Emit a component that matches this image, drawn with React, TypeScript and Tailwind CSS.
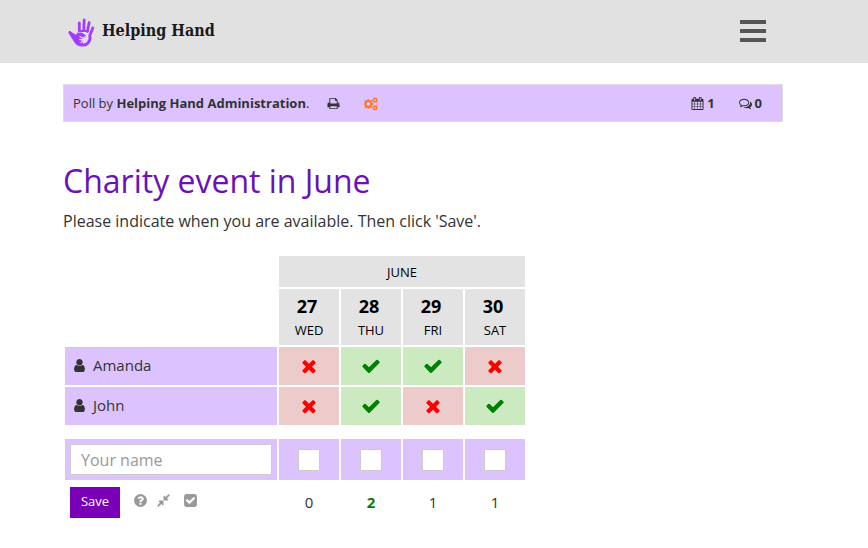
import React from 'react';

const ICONS = {
  check: 'M1671 566q0 40-28 68l-724 724-136 136q-28 28-68 28t-68-28l-136-136-362-362q-28-28-28-68t28-68l136-136q28-28 68-28t68 28l294 295 656-657q28-28 68-28t68 28l136 136q28 28 28 68z',
  times: 'M1490 1322q0 40-28 68l-136 136q-28 28-68 28t-68-28l-294-294-294 294q-28 28-68 28t-68-28l-136-136q-28-28-28-68t28-68l294-294-294-294q-28-28-28-68t28-68l136-136q28-28 68-28t68 28l294 294 294-294q28-28 68-28t68 28l136 136q28 28 28 68t-28 68l-294 294 294 294q28 28 28 68z',
  user: 'M1536 1399q0 109-62.5 187t-150.5 78h-854q-88 0-150.5-78t-62.5-187q0-85 8.5-160.5t31.5-152 58.5-131 94-89 134.5-34.5q131 128 313 128t313-128q76 0 134.5 34.5t94 89 58.5 131 31.5 152 8.5 160.5zm-256-887q0 159-112.5 271.5t-271.5 112.5-271.5-112.5-112.5-271.5 112.5-271.5 271.5-112.5 271.5 112.5 112.5 271.5z',
  print: 'M448 1536h896v-256h-896v256zm0-640h896v-384h-160q-40 0-68-28t-28-68v-160h-640v640zm1152 64q0-26-19-45t-45-19-45 19-19 45 19 45 45 19 45-19 19-45zm128 0v416q0 13-9.5 22.5t-22.5 9.5h-224v160q0 40-28 68t-68 28h-960q-40 0-68-28t-28-68v-160h-224q-13 0-22.5-9.5t-9.5-22.5v-416q0-79 56.5-135.5t135.5-56.5h64v-544q0-40 28-68t68-28h672q40 0 88 20t76 48l152 152q28 28 48 76t20 88v256h64q79 0 135.5 56.5t56.5 135.5z',
  cogs: 'M832 896q0-106-75-181t-181-75-181 75-75 181 75 181 181 75 181-75 75-181zm768 512q0-52-38-90t-90-38-90 38-38 90q0 53 37.5 90.5t90.5 37.5 90.5-37.5 37.5-90.5zm0-1024q0-52-38-90t-90-38-90 38-38 90q0 53 37.5 90.5t90.5 37.5 90.5-37.5 37.5-90.5zm-384 421v185q0 10-7 19.5t-16 10.5l-155 24q-11 35-32 76 34 48 90 115 7 11 7 20 0 12-7 19-23 30-82.5 89.5t-78.5 59.5q-11 0-21-7l-115-90q-37 19-77 31-11 108-23 155-7 24-30 24h-186q-11 0-20-7.5t-10-17.5l-23-153q-34-10-75-31l-118 89q-7 7-20 7-11 0-21-8-144-133-144-160 0-9 7-19 10-14 41-53t47-61q-23-44-35-82l-152-24q-10-1-17-9.5t-7-19.5v-185q0-10 7-19.5t16-10.5l155-24q11-35 32-76-34-48-90-115-7-11-7-20 0-12 7-20 22-30 82-89t79-59q11 0 21 7l115 90q34-18 77-32 11-108 23-154 7-24 30-24h186q11 0 20 7.5t10 17.5l23 153q34 10 75 31l118-89q8-7 20-7 11 0 21 8 144 133 144 160 0 8-7 19-12 16-42 54t-45 60q23 48 34 82l152 23q10 2 17 10.5t7 19.5zm640 533v140q0 16-149 31-12 27-30 52 51 113 51 138 0 4-4 7-122 71-124 71-8 0-46-47t-52-68q-20 2-30 2t-30-2q-14 21-52 68t-46 47q-2 0-124-71-4-3-4-7 0-25 51-138-18-25-30-52-149-15-149-31v-140q0-16 149-31 13-29 30-52-51-113-51-138 0-4 4-7 4-2 35-20t59-34 30-16q8 0 46 46.5t52 67.5q20-2 30-2t30 2q51-71 92-112l6-2q4 0 124 70 4 3 4 7 0 25-51 138 17 23 30 52 149 15 149 31zm0-1024v140q0 16-149 31-12 27-30 52 51 113 51 138 0 4-4 7-122 71-124 71-8 0-46-47t-52-68q-20 2-30 2t-30-2q-14 21-52 68t-46 47q-2 0-124-71-4-3-4-7 0-25 51-138-18-25-30-52-149-15-149-31v-140q0-16 149-31 13-29 30-52-51-113-51-138 0-4 4-7 4-2 35-20t59-34 30-16q8 0 46 46.5t52 67.5q20-2 30-2t30 2q51-71 92-112l6-2q4 0 124 70 4 3 4 7 0 25-51 138 17 23 30 52 149 15 149 31z',
  calendar: 'M192 1664h288v-288h-288v288zm352 0h320v-288h-320v288zm-352-352h288v-320h-288v320zm352 0h320v-320h-320v320zm-352-384h288v-288h-288v288zm736 736h320v-288h-320v288zm-384-736h320v-288h-320v288zm768 736h288v-288h-288v288zm-384-352h320v-320h-320v320zm-352-864v-288q0-13-9.5-22.5t-22.5-9.5h-64q-13 0-22.5 9.5t-9.5 22.5v288q0 13 9.5 22.5t22.5 9.5h64q13 0 22.5-9.5t9.5-22.5zm736 864h288v-320h-288v320zm-384-384h320v-288h-320v288zm384 0h288v-288h-288v288zm32-480v-288q0-13-9.5-22.5t-22.5-9.5h-64q-13 0-22.5 9.5t-9.5 22.5v288q0 13 9.5 22.5t22.5 9.5h64q13 0 22.5-9.5t9.5-22.5zm384-64v1280q0 52-38 90t-90 38h-1408q-52 0-90-38t-38-90v-1280q0-52 38-90t90-38h128v-96q0-66 47-113t113-47h64q66 0 113 47t47 113v96h384v-96q0-66 47-113t113-47h64q66 0 113 47t47 113v96h128q52 0 90 38t38 90z',
  comments: 'M704 384q-153 0-286 52t-211.5 141-78.5 191q0 82 53 158t149 132l97 56-35 84q34-20 62-39l44-31 53 10q78 14 153 14 153 0 286-52t211.5-141 78.5-191-78.5-191-211.5-141-286-52zm0-128q191 0 353.5 68.5t256.5 186.5 94 257-94 257-256.5 186.5-353.5 68.5q-86 0-176-16-124 88-278 128-36 9-86 16h-3q-11 0-20.5-8t-11.5-21q-1-3-1-6.5t.5-6.5 2-6l2.5-5 3.5-5.5 4-5 4.5-5 4-4.5q5-6 23-25t26-29.5 22.5-29 25-38.5 20.5-44q-124-72-195-177t-71-224q0-139 94-257t256.5-186.5 353.5-68.5zm822 1169q10 24 20.5 44t25 38.5 22.5 29 26 29.5 23 25q1 1 4 4.5t4.5 5 4 5 3.5 5.5l2.5 5 2 6 .5 6.5-1 6.5q-3 14-13 22t-22 7q-50-7-86-16-154-40-278-128-90 16-176 16-271 0-472-132 58 4 88 4 161 0 309-45t264-129q125-92 192-212t67-254q0-77-23-152 129 71 204 178t75 230q0 120-71 224.5t-195 176.5z',
  question: 'M1024 1376v-192q0-14-9-23t-23-9h-192q-14 0-23 9t-9 23v192q0 14 9 23t23 9h192q14 0 23-9t9-23zm256-672q0-88-55.5-163t-138.5-116-170-41q-243 0-371 213-15 24 8 42l132 100q7 6 19 6 16 0 25-12 53-68 86-92 34-24 86-24 48 0 85.5 26t37.5 59q0 38-20 61t-68 45q-63 28-115.5 86.5t-52.5 125.5v36q0 14 9 23t23 9h192q14 0 23-9t9-23q0-19 21.5-49.5t54.5-49.5q32-18 49-28.5t46-35 44.5-48 28-60.5 12.5-81zm384 192q0 209-103 385.5t-279.5 279.5-385.5 103-385.5-103-279.5-279.5-103-385.5 103-385.5 279.5-279.5 385.5-103 385.5 103 279.5 279.5 103 385.5z',
  compress: 'M896 960v448q0 26-19 45t-45 19-45-19l-144-144-332 332q-10 10-23 10t-23-10l-114-114q-10-10-10-23t10-23l332-332-144-144q-19-19-19-45t19-45 45-19h448q26 0 45 19t19 45zm755-672q0 13-10 23l-332 332 144 144q19 19 19 45t-19 45-45 19h-448q-26 0-45-19t-19-45v-448q0-26 19-45t45-19 45 19l144 144 332-332q10-10 23-10t23 10l114 114q10 10 10 23z',
  checkSquare: 'M813 1299l614-614q19-19 19-45t-19-45l-102-102q-19-19-45-19t-45 19l-467 467-211-211q-19-19-45-19t-45 19l-102 102q-19 19-19 45t19 45l358 358q19 19 45 19t45-19zm851-883v960q0 119-84.5 203.5t-203.5 84.5h-960q-119 0-203.5-84.5t-84.5-203.5v-960q0-119 84.5-203.5t203.5-84.5h960q119 0 203.5 84.5t84.5 203.5z',
};

interface IconProps {
  name: keyof typeof ICONS;
  className: string;
}

const Icon: React.FC<IconProps> = ({ name, className }) => (
  <svg viewBox={name === 'cogs' ? '0 0 1856 1792' : '0 0 1792 1792'} fill="currentColor" aria-hidden="true" className={className}>
    <path d={ICONS[name]} />
  </svg>
);

const HandLogo: React.FC = () => (
  <svg viewBox="0 0 28 32" className="h-8 w-7" fill="none" stroke="#a33cff" strokeLinecap="round" strokeLinejoin="round" aria-hidden="true">
    {/* fingers */}
    <path d="M12.3 8v7.5M17.2 5l-.4 10.5M22.2 7.5l-1.8 9" strokeWidth="2.8" />
    <path d="M12.3 16h8" strokeWidth="2" />
    {/* thumb, palm and little finger */}
    <path d="M25.8 13l-3 7.5q1.200 4-1.800 7.500-2 2.200-6 2.200-4 0-6.500-3.700L2.800 17.500" strokeWidth="2.800" />
    <path d="M3.500 17l6.500 4q-1.500-2 .5-2.800 4-.8 6 .8l2 2-4 2 1 6-6-2z" fill="#a33cff" strokeWidth="1" />
    {/* small hand inside the palm */}
    <path d="M13 21.500l3.500 2M12.800 24.500l3.200.5M14 27.500l2.500-1.500M18 22v2M19.500 24l-2 3" stroke="#e4d3f2" strokeWidth="1.300" />
  </svg>
);

const DAYS = [
  { date: 27, day: 'WED', total: 0 },
  { date: 28, day: 'THU', total: 2 },
  { date: 29, day: 'FRI', total: 1 },
  { date: 30, day: 'SAT', total: 1 },
];

const VOTES = [
  { name: 'Amanda', answers: [false, true, true, false] },
  { name: 'John', answers: [false, true, false, true] },
];

const BEST = Math.max(...DAYS.map((d) => d.total));

export default function App() {
  return (
    <div className="min-h-screen bg-white font-['Open_Sans',sans-serif] text-[#333]">
      {/* Header */}
      <header className="flex h-[63px] items-center justify-between bg-[#e1e1e1] pr-[102px] pb-[2px] pl-[67px]">
        <a href="#" className="flex items-center gap-[7px]">
          <HandLogo />
          <span className="font-['DejaVu_Serif_Condensed','DejaVu_Serif',serif] text-base leading-5 font-bold text-[#1a1a1a]">Helping Hand</span>
        </a>
        <button type="button" aria-label="Menu" className="flex flex-col gap-[5px]">
          <span className="h-1 w-[26px] bg-[#555]"></span>
          <span className="h-1 w-[26px] bg-[#555]"></span>
          <span className="h-1 w-[26px] bg-[#555]"></span>
        </button>
      </header>

      <main className="pt-[21px] pr-[85px] pl-[63px]">
        {/* Poll info bar */}
        <div className="flex h-[38px] items-center justify-between border border-[#ddd] bg-[#dcc3ff] pt-px pr-5 pl-[9px] text-[13px]">
          <div className="flex items-center">
            <p>Poll by <strong>Helping Hand Administration</strong>.</p>
            <button type="button" aria-label="Print" className="ml-[18px]">
              <Icon name="print" className="size-[13px]" />
            </button>
            <button type="button" aria-label="Settings" className="ml-6 text-[#ff7519]">
              <Icon name="cogs" className="size-[14px]" />
            </button>
          </div>
          <div className="flex items-center gap-6 font-bold">
            <span className="flex items-center gap-[3px]"><Icon name="calendar" className="size-[13px]" />1</span>
            <span className="flex items-center gap-[3px]"><Icon name="comments" className="size-[13px]" />0</span>
          </div>
        </div>

        <h1 className="mt-[39px] text-[32px] leading-10 text-[#6a11b8]">Charity event in June</h1>
        <p className="mt-2 text-base">Please indicate when you are available. Then click 'Save'.</p>

        {/* Poll table */}
        <form className="mt-[21px]" onSubmit={(e) => e.preventDefault()}>
          <table className="w-[464px] table-fixed border-separate border-spacing-[2px] text-center">
            <colgroup>
              <col className="w-[212px]" />
              <col span={4} className="w-[60px]" />
            </colgroup>
            <thead className="text-[13px] text-black">
              <tr className="h-[31px]">
                <td></td>
                <th colSpan={4} scope="colgroup" className="bg-[#e3e3e3] p-0 pt-[2px] font-normal">JUNE</th>
              </tr>
              <tr className="h-14">
                <td></td>
                {DAYS.map((d) => (
                  <th key={d.date} scope="col" className="bg-[#e3e3e3] p-0 pt-[2px] font-normal">
                    <span className="block pr-1 text-lg leading-6 font-bold">{d.date}</span>
                    <span className="block leading-6">{d.day}</span>
                  </th>
                ))}
              </tr>
            </thead>
            <tbody>
              {VOTES.map((vote) => (
                <tr key={vote.name} className="h-[38px]">
                  <th scope="row" className="bg-[#dcc3ff] p-0 pb-[2px] pl-[7px] font-normal">
                    <span className="flex items-center gap-[6px] text-[15px]">
                      <Icon name="user" className="size-[15px]" />
                      {vote.name}
                    </span>
                  </th>
                  {vote.answers.map((yes, i) => (
                    <td key={DAYS[i].date} className={yes ? 'bg-[#cbeac0] p-0 text-[#008000]' : 'bg-[#edcbcb] p-0 text-[#f00]'}>
                      <Icon name={yes ? 'check' : 'times'} className="mx-auto size-5" />
                    </td>
                  ))}
                </tr>
              ))}
              <tr className="h-[10px]">
                <td colSpan={5} className="p-0"></td>
              </tr>
              <tr className="h-[41px]">
                <td className="bg-[#dcc3ff] px-[5px] py-0">
                  <input
                    type="text"
                    aria-label="Your name"
                    placeholder="Your name"
                    className="block h-[31px] w-full border border-[#ccc] bg-white px-[10px] text-base placeholder:text-[#999]"
                  />
                </td>
                {DAYS.map((d) => (
                  <td key={d.date} className="bg-[#dcc3ff] p-0">
                    <input
                      type="checkbox"
                      aria-label={`${d.day} ${d.date}`}
                      className="mx-auto block size-[22px] appearance-none border border-[#d0ccc4] bg-white checked:bg-[#7a00b8]"
                    />
                  </td>
                ))}
              </tr>
            </tbody>
            <tfoot>
              <tr className="h-10">
                <td className="px-[5px] py-0">
                  <div className="flex items-center text-[#999]">
                    <button type="submit" className="h-[31px] w-[50px] bg-[#7a00b8] text-[13px] text-white">Save</button>
                    <div className="mb-1 ml-[13px] flex items-center">
                      <button type="button" aria-label="Help"><Icon name="question" className="size-[15px]" /></button>
                      <button type="button" aria-label="Collapse" className="ml-2"><Icon name="compress" className="size-[15px]" /></button>
                      <button type="button" aria-label="Select all" className="ml-3"><Icon name="checkSquare" className="size-[15px]" /></button>
                    </div>
                  </div>
                </td>
                {DAYS.map((d) => (
                  <td key={d.date} className={d.total === BEST ? 'p-0 text-[15px] font-bold text-[#008000]' : 'p-0 text-[15px]'}>{d.total}</td>
                ))}
              </tr>
            </tfoot>
          </table>
        </form>
      </main>
    </div>
  );
}
